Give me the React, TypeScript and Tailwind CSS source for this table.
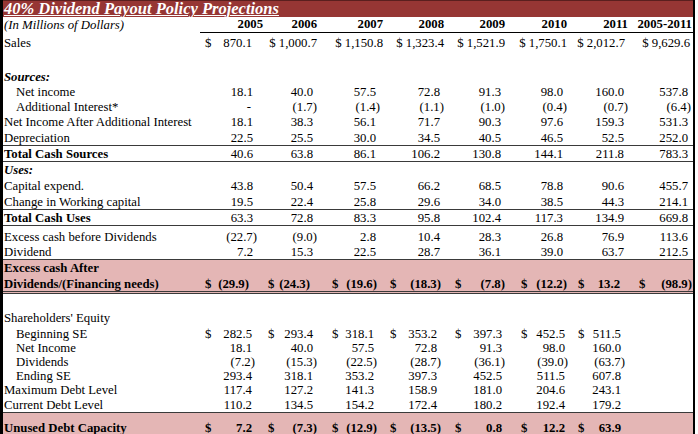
import React from 'react';

const GRID = 'grid grid-cols-[197px_64px_54px_66px_61px_61px_62px_61px_64px]';

// right padding for plain / bracketed numbers, per column
const UP_PR = ['pr-[11px]', 'pr-[5px]', 'pr-[8px]', 'pr-[5px]', 'pr-[5px]', 'pr-[5px]', 'pr-[5px]', 'pr-[5px]'];
const UP_PP = ['pr-[7px]', 'pr-[1px]', 'pr-[4px]', 'pr-[1px]', 'pr-[1px]', 'pr-[1px]', 'pr-[1px]', 'pr-[2px]'];

// accounting rows: "$" offset plus number padding
const ACC_PL = ['pl-[5px]', 'pl-[4px]', 'pl-[14px]', 'pl-[6px]', 'pl-[10px]', 'pl-[15px]', 'pl-[10px]', 'pl-[10px]'];
const LOW_PR = ['pr-[12px]', 'pr-[5px]', 'pr-[10px]', 'pr-[8px]', 'pr-[4px]', 'pr-[3px]', 'pr-[8px]', 'pr-0'];
const LOW_PP = ['pr-[9px]', 'pr-[1px]', 'pr-[7px]', 'pr-[4px]', 'pr-[1px]', 'pr-0', 'pr-[4px]', 'pr-0'];
const PINK_PR = ['pr-[19px]', 'pr-[12px]', 'pr-[11px]', 'pr-[8px]', 'pr-[5px]', 'pr-[5px]', 'pr-[9px]', 'pr-[5px]'];
const PINK_PP = ['pr-[15px]', 'pr-[8px]', 'pr-[7px]', 'pr-[4px]', 'pr-[1px]', 'pr-[1px]', 'pr-[5px]', 'pr-[1px]'];

function Row({
  label,
  values = [],
  h,
  pr = UP_PR,
  pp = UP_PP,
  indent,
  labelClass = '',
  rowClass = '',
  dollar,
  bold,
}: {
  label: string;
  values?: string[];
  h: string;
  pr?: string[];
  pp?: string[];
  indent?: boolean;
  labelClass?: string;
  rowClass?: string;
  dollar?: boolean;
  bold?: boolean;
}) {
  return (
    <div className={`${GRID} ${h} ${rowClass || 'items-end'}`}>
      <div className={`${indent ? 'pl-[13px]' : 'pl-[1px]'} whitespace-nowrap ${labelClass}`}>{label}</div>
      {values.map((v, i) => (
        <div
          key={i}
          className={`flex justify-between whitespace-nowrap ${v.endsWith(')') ? pp[i] : pr[i]} ${bold ? 'font-bold' : ''}`}
        >
          <span className={ACC_PL[i]}>{dollar ? '$' : ''}</span>
          <span>{v}</span>
        </div>
      ))}
    </div>
  );
}

const years = ['2005', '2006', '2007', '2008', '2009', '2010', '2011', '2005-2011'];
const sales = ['$ 1,000.7', '$ 1,150.8', '$ 1,323.4', '$ 1,521.9', '$ 1,750.1', '$ 2,012.7', '$ 9,629.6'];
const salesPr = ['pr-[1px]', 'pr-[1px]', 'pr-[1px]', 'pr-[1px]', 'pr-[1px]', 'pr-[4px]', 'pr-[3px]'];

export default function App() {
  return (
    <div className="w-[698px] h-[434px] overflow-hidden bg-white">
      <div
        className="w-[695px] h-[434px] overflow-hidden border-l-[3px] border-r-[2px] border-black text-[12.75px] leading-[14px] text-black"
        style={{ fontFamily: '"Liberation Serif", "Times New Roman", serif' }}
      >
        <div className="h-[17px] bg-[#963634] border-t border-[#5a1f1e] flex items-end pl-[1px]">
          <span className="text-white text-[16.5px] leading-[16px] font-bold italic underline decoration-1 underline-offset-[1px]">
            40% Dividend Payout Policy Projections
          </span>
        </div>

        <div className={`${GRID} h-[16px] items-end`}>
          <div className="pl-[1px] italic pb-[1px]">(In Millions of Dollars)</div>
          {years.map((y) => (
            <div key={y} className="text-right font-bold border-b border-black pb-[1px] pr-[1px]">{y}</div>
          ))}
        </div>

        <div className={`${GRID} h-[17px] items-end`}>
          <div className="pl-[1px]">Sales</div>
          <div className="flex justify-between pl-[5px] pr-[12px]">
            <span>$</span>
            <span>870.1</span>
          </div>
          {sales.map((s, i) => (
            <div key={s} className={`text-right whitespace-nowrap ${salesPr[i]}`}>{s}</div>
          ))}
        </div>

        <div className="h-[18px]" />
        <Row label="Sources:" h="h-[16px]" labelClass="font-bold italic" />
        <Row label="Net income" indent h="h-[15px]" values={['18.1', '40.0', '57.5', '72.8', '91.3', '98.0', '160.0', '537.8']} />
        <div className={`${GRID} h-[15px] items-end`}>
          <div className="pl-[13px]">Additional Interest*</div>
          <div className="text-right pr-[13px]">-</div>
          {['(1.7)', '(1.4)', '(1.1)', '(1.0)', '(0.4)', '(0.7)', '(6.4)'].map((v, i) => (
            <div key={i} className={`text-right ${UP_PP[i + 1]}`}>{v}</div>
          ))}
        </div>
        <Row label="Net Income After Additional Interest" h="h-[15px]" values={['18.1', '38.3', '56.1', '71.7', '90.3', '97.6', '159.3', '531.3']} />
        <Row label="Depreciation" h="h-[16px]" values={['22.5', '25.5', '30.0', '34.5', '40.5', '46.5', '52.5', '252.0']} />
        <Row
          label="Total Cash Sources"
          h="h-[17px]"
          labelClass="font-bold"
          rowClass="items-end border-y border-[#3a3a3a]"
          values={['40.6', '63.8', '86.1', '106.2', '130.8', '144.1', '211.8', '783.3']}
        />
        <Row label="Uses:" h="h-[15px]" labelClass="font-bold italic" />
        <Row label="Capital expend." h="h-[16px]" values={['43.8', '50.4', '57.5', '66.2', '68.5', '78.8', '90.6', '455.7']} />
        <Row label="Change in Working capital" h="h-[16px]" values={['19.5', '22.4', '25.8', '29.6', '34.0', '38.5', '44.3', '214.1']} />
        <Row
          label="Total Cash Uses"
          h="h-[17px]"
          labelClass="font-bold"
          rowClass="items-end border-y border-[#3a3a3a]"
          values={['63.3', '72.8', '83.3', '95.8', '102.4', '117.3', '134.9', '669.8']}
        />
        <Row label="Excess cash before Dividends" h="h-[18px]" values={['(22.7)', '(9.0)', '2.8', '10.4', '28.3', '26.8', '76.9', '113.6']} />
        <Row label="Dividend" h="h-[15px]" values={['7.2', '15.3', '22.5', '28.7', '36.1', '39.0', '63.7', '212.5']} />

        <div className="bg-[#e4b6b5] border-t border-[#3a3a3a] border-b-[3px] border-b-[#3a3a3a] border-double">
          <Row label="Excess cash After" h="h-[15px]" labelClass="font-bold" />
          <Row
            label="Dividends/(Financing needs)"
            h="h-[16px]"
            pr={PINK_PR}
            pp={PINK_PP}
            labelClass="font-bold"
            dollar
            bold
            values={['(29.9)', '(24.3)', '(19.6)', '(18.3)', '(7.8)', '(12.2)', '13.2', '(98.9)']}
          />
        </div>

        <div className="h-[15px]" />
        <Row label="Shareholders' Equity" h="h-[16px]" />
        <Row label="Beginning SE" indent dollar h="h-[16px]" pr={LOW_PR} pp={LOW_PP} values={['282.5', '293.4', '318.1', '353.2', '397.3', '452.5', '511.5']} />
        <Row label="Net Income" indent h="h-[14px]" pr={LOW_PR} pp={LOW_PP} values={['18.1', '40.0', '57.5', '72.8', '91.3', '98.0', '160.0']} />
        <Row label="Dividends" indent h="h-[14px]" pr={LOW_PR} pp={LOW_PP} values={['(7.2)', '(15.3)', '(22.5)', '(28.7)', '(36.1)', '(39.0)', '(63.7)']} />
        <Row label="Ending SE" indent h="h-[14px]" pr={LOW_PR} pp={LOW_PP} values={['293.4', '318.1', '353.2', '397.3', '452.5', '511.5', '607.8']} />
        <Row label="Maximum Debt Level" h="h-[14px]" pr={LOW_PR} pp={LOW_PP} values={['117.4', '127.2', '141.3', '158.9', '181.0', '204.6', '243.1']} />
        <Row label="Current Debt Level" h="h-[15px]" pr={LOW_PR} pp={LOW_PP} values={['110.2', '134.5', '154.2', '172.4', '180.2', '192.4', '179.2']} />
        <Row
          label="Unused Debt Capacity"
          h="h-[24px]"
          labelClass="font-bold"
          rowClass="items-start pt-[8px] bg-[#e4b6b5] border-t border-[#3a3a3a]"
          pr={LOW_PR}
          pp={LOW_PP}
          dollar
          bold
          values={['7.2', '(7.3)', '(12.9)', '(13.5)', '0.8', '12.2', '63.9']}
        />
      </div>
    </div>
  );
}
